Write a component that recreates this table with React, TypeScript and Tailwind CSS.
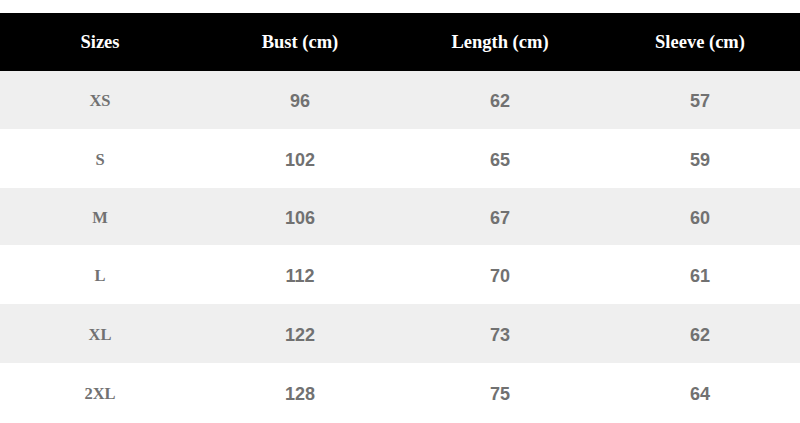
import React from "react";

const headers = ["Sizes", "Bust (cm)", "Length (cm)", "Sleeve (cm)"];
const rows: [string, string, string, string, number][] = [
  ["XS", "96", "62", "57", 58],
  ["S", "102", "65", "59", 59],
  ["M", "106", "67", "60", 57],
  ["L", "112", "70", "61", 59],
  ["XL", "122", "73", "62", 59],
  ["2XL", "128", "75", "64", 60],
];

export default function App() {
  return (
    <div className="w-[800px] h-[423px] bg-white overflow-hidden pt-[13px]">
      <div className="grid grid-cols-4 h-[58px] bg-black text-white font-bold text-[18.5px] pt-[1px]" style={{ fontFamily: '"Liberation Serif", serif' }}>
        {headers.map((h) => (
          <div key={h} className="flex items-center justify-center">{h}</div>
        ))}
      </div>
      {rows.map((r, i) => (
        <div
          key={r[0]}
          className={`grid grid-cols-4 ${i % 2 === 0 ? "bg-[#efefef]" : "bg-white"} text-[#717171] font-bold pt-[3px]`}
          style={{ height: r[4] }}
        >
          <div className="flex items-center justify-center text-[16.5px] font-['Liberation_Serif',serif]">{r[0]}</div>
          <div className="flex items-center justify-center text-[18px] font-['Liberation_Sans',sans-serif]">{r[1]}</div>
          <div className="flex items-center justify-center text-[18px] font-['Liberation_Sans',sans-serif]">{r[2]}</div>
          <div className="flex items-center justify-center text-[18px] font-['Liberation_Sans',sans-serif]">{r[3]}</div>
        </div>
      ))}
    </div>
  );
}
